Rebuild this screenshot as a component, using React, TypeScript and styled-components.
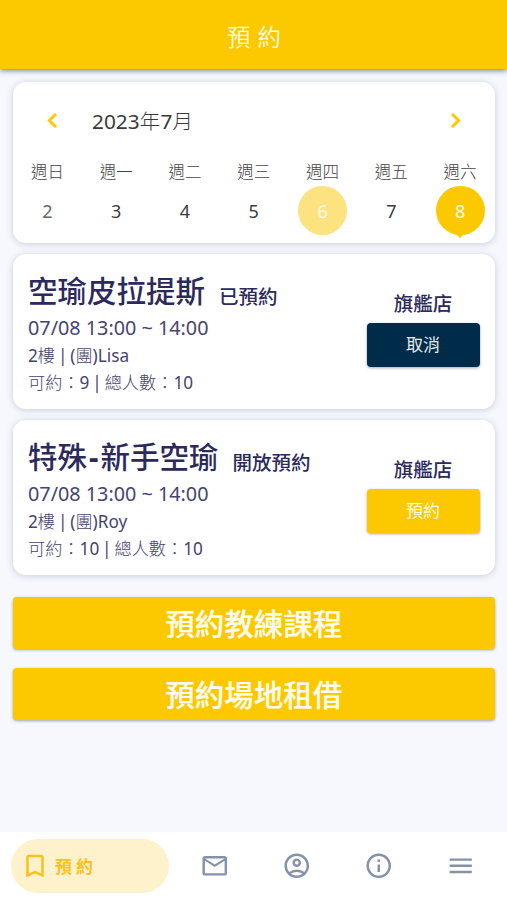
import React from "react";
import styled, { createGlobalStyle } from "styled-components";
import {
  MdBookmarkBorder,
  MdChevronLeft,
  MdChevronRight,
  MdMenu,
  MdOutlineAccountCircle,
  MdOutlineEmail,
  MdOutlineInfo,
} from "react-icons/md";

const YELLOW = "#fcc900";
const NAVY = "#002b49";
const INDIGO = "#2c2a5c";
const LIGHT_CJK = `"Noto Sans", "Noto Sans CJK TC Light", "Noto Sans CJK TC", sans-serif`;

const GlobalStyle = createGlobalStyle`
  * { box-sizing: border-box; }
  body {
    margin: 0;
    background: #f6f8fd;
    font-family: "Noto Sans", "Noto Sans CJK TC", sans-serif;
  }
  button { font-family: inherit; border: 0; padding: 0; cursor: pointer; }
`;

const Screen = styled.div`
  display: flex;
  flex-direction: column;
  width: 507px;
  height: 900px;
  overflow: hidden;
`;

const Header = styled.header`
  flex: none;
  height: 69px;
  padding: 2px 0 0 8px;
  display: flex;
  align-items: center;
  justify-content: center;
  background: ${YELLOW};
  color: #fffbe6;
  font-size: 23.5px;
  font-weight: 350;
  letter-spacing: 7px;
  box-shadow: 0 2px 5px rgba(20, 30, 60, 0.5);
  z-index: 1;
`;

const Content = styled.main`
  flex: 1;
  display: flex;
  flex-direction: column;
  padding: 12.5px 12.5px 0 13px;
`;

const Card = styled.section`
  background: #fff;
  border-radius: 13px;
  box-shadow: 0 1px 7px rgba(40, 55, 100, 0.22);
`;

const Calendar = styled(Card)`
  height: 161px;
`;

const MonthBar = styled.div`
  display: flex;
  align-items: center;
  height: 78px;
  padding: 0 25px;
`;

const ArrowButton = styled.button`
  display: flex;
  background: none;
  color: ${YELLOW};
  font-size: 29px;

  path:last-child { stroke: currentColor; stroke-width: 0.6px; }
`;

const Month = styled.h2`
  flex: 1;
  margin: -2px 0 0 25px;
  font-family: ${LIGHT_CJK};
  font-size: 20.8px;
  font-weight: 400;
  color: #3a3a3a;
`;

const Week = styled.div`
  display: grid;
  grid-template-columns: repeat(7, 1fr);
`;

const Day = styled.div`
  display: flex;
  flex-direction: column;
  align-items: center;
`;

const DayName = styled.span`
  height: 26px;
  line-height: 24px;
  font-size: 16.5px;
  font-weight: 300;
  color: #444;
`;

type DayState = "none" | "muted" | "today" | "selected";

const DayNumber = styled.span<{ $state: DayState }>`
  position: relative;
  width: 49px;
  height: 49px;
  border-radius: 50%;
  line-height: 51px;
  text-align: center;
  font-size: 18px;
  color: ${(p) =>
    p.$state === "none" ? "#3a3a3a" : p.$state === "muted" ? "#666" : "#fffbe8"};
  background: ${(p) =>
    p.$state === "today" ? "#fde380" : p.$state === "selected" ? YELLOW : "none"};

  &::after {
    content: "";
    display: ${(p) => (p.$state === "selected" ? "block" : "none")};
    position: absolute;
    left: 50%;
    bottom: -3px;
    transform: translateX(-50%);
    border: 5px solid transparent;
    border-top-color: ${YELLOW};
    border-bottom: 0;
  }
`;

const Lesson = styled(Card)`
  display: flex;
  justify-content: space-between;
  height: 154.5px;
  margin-top: 11.6px;
  padding: 13px 15px 0 15px;
  color: ${INDIGO};
`;

const Details = styled.div`
  display: flex;
  flex-direction: column;
  white-space: nowrap;
`;

const TitleRow = styled.div`
  display: flex;
  align-items: center;
  height: 45px;
`;

const Title = styled.h3`
  margin: 0;
  font-size: 29.5px;
  font-weight: 500;
`;

const Dash = styled.span`
  padding: 0 2px;
  font-weight: 700;
`;

const Status = styled.span`
  margin: 12px 0 0 14px;
  font-size: 19.5px;
  font-weight: 500;
`;

const Time = styled.div`
  height: 30px;
  line-height: 32px;
  font-size: 19.8px;
  color: #46446f;
`;

const Info = styled.div`
  height: 27px;
  line-height: 27px;
  font-family: ${LIGHT_CJK};
  font-size: 17.2px;
  word-spacing: -1.6px;
  color: #46446f;
`;

const Side = styled.div`
  display: flex;
  flex-direction: column;
  align-items: center;
  padding-top: 22.5px;
`;

const Branch = styled.span`
  height: 33px;
  line-height: 28px;
  font-size: 19.5px;
  font-weight: 500;
`;

const ActionButton = styled.button<{ $cancel?: boolean }>`
  width: 113px;
  height: 44.5px;
  border-radius: 4px;
  background: ${(p) => (p.$cancel ? NAVY : YELLOW)};
  color: ${(p) => (p.$cancel ? "#e4eaef" : "#fffbe0")};
  font-size: 17px;
  line-height: 44px;
  box-shadow: 0 1px 3px rgba(0, 0, 0, 0.35);
`;

const WideButton = styled.button`
  flex: none;
  height: 52px;
  margin-top: 19px;
  padding-top: 1px;
  border-radius: 4px;
  background: ${YELLOW};
  color: #fffdf2;
  font-size: 29.5px;
  font-weight: 500;
  line-height: 51px;
  -webkit-text-stroke: 0.2px currentColor;
  box-shadow: 0 1px 3px rgba(20, 30, 60, 0.4);

  ${Lesson} + & {
    margin-top: 22.3px;
  }
`;

const NavBar = styled.nav`
  flex: none;
  display: flex;
  align-items: center;
  height: 68px;
  padding-left: 11px;
  background: #fff;
`;

const ActiveTab = styled.a`
  display: flex;
  align-items: center;
  width: 158px;
  height: 54px;
  padding-left: 9px;
  border-radius: 27px;
  background: #fdf2cb;
  color: #fac11c;
  font-size: 30px;
`;

const TabLabel = styled.span`
  margin: -2px 0 0 5px;
  font-size: 17px;
  font-weight: 700;
  letter-spacing: 4px;
`;

const Tab = styled.a`
  display: flex;
  justify-content: center;
  width: 82px;
  color: #8592a9;
  font-size: 29.5px;

  ${ActiveTab} + & {
    margin-left: 5px;
  }
`;

const days: { name: string; date: number; state: DayState }[] = [
  { name: "週日", date: 2, state: "muted" },
  { name: "週一", date: 3, state: "none" },
  { name: "週二", date: 4, state: "none" },
  { name: "週三", date: 5, state: "none" },
  { name: "週四", date: 6, state: "today" },
  { name: "週五", date: 7, state: "none" },
  { name: "週六", date: 8, state: "selected" },
];

const lessons = [
  { title: ["空瑜皮拉提斯"], status: "已預約", coach: "Lisa", open: 9, booked: true },
  { title: ["特殊", "新手空瑜"], status: "開放預約", coach: "Roy", open: 10, booked: false },
];

export default function App() {
  return (
    <Screen lang="zh-Hant">
      <GlobalStyle />
      <Header>預約</Header>
      <Content>
        <Calendar>
          <MonthBar>
            <ArrowButton aria-label="上週"><MdChevronLeft /></ArrowButton>
            <Month>2023年7月</Month>
            <ArrowButton aria-label="下週"><MdChevronRight /></ArrowButton>
          </MonthBar>
          <Week>
            {days.map((d) => (
              <Day key={d.date}>
                <DayName>{d.name}</DayName>
                <DayNumber $state={d.state}>{d.date}</DayNumber>
              </Day>
            ))}
          </Week>
        </Calendar>
        {lessons.map((l) => (
          <Lesson key={l.coach}>
            <Details>
              <TitleRow>
                <Title>
                  {l.title.map((part, i) => (
                    <React.Fragment key={part}>
                      {i > 0 && <Dash>-</Dash>}
                      {part}
                    </React.Fragment>
                  ))}
                </Title>
                <Status>{l.status}</Status>
              </TitleRow>
              <Time>07/08 13:00 ~ 14:00</Time>
              <Info>2樓 | (團){l.coach}</Info>
              <Info>可約：{l.open} | 總人數：10</Info>
            </Details>
            <Side>
              <Branch>旗艦店</Branch>
              <ActionButton $cancel={l.booked}>{l.booked ? "取消" : "預約"}</ActionButton>
            </Side>
          </Lesson>
        ))}
        <WideButton>預約教練課程</WideButton>
        <WideButton>預約場地租借</WideButton>
      </Content>
      <NavBar>
        <ActiveTab>
          <MdBookmarkBorder />
          <TabLabel>預約</TabLabel>
        </ActiveTab>
        <Tab><MdOutlineEmail /></Tab>
        <Tab><MdOutlineAccountCircle /></Tab>
        <Tab><MdOutlineInfo /></Tab>
        <Tab><MdMenu /></Tab>
      </NavBar>
    </Screen>
  );
}
